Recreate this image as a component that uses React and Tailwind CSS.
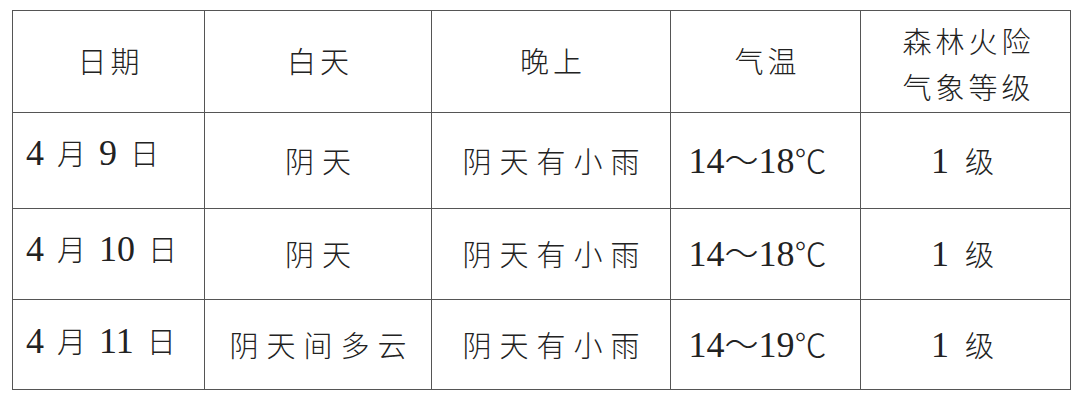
const rows = [
  { m: "9", day: "阴天", temp: ["14", "18"], h: "h-[96px]", lift: "pb-[16px]" },
  { m: "10", day: "阴天", temp: ["14", "18"], h: "h-[91px]", lift: "pb-[10px]" },
  { m: "11", day: "阴天间多云", temp: ["14", "19"], h: "h-[90px]", lift: "pb-[8px]" },
];

const cell = "border-[1.5px] border-[#555] text-center align-middle";
const num = "font-['Liberation_Serif',serif] font-normal text-[36px] leading-none tracking-normal";

export default function App() {
  return (
    <div className="w-[1080px] h-[404px] bg-white pt-[10px] pl-[12px] text-[#222] font-['Noto_Sans_CJK_SC',sans-serif] font-light">
      <table className="border-collapse table-fixed w-[1058px] text-[29px]">
        <colgroup>
          <col className="w-[192px]" />
          <col className="w-[227px]" />
          <col className="w-[239px]" />
          <col className="w-[190px]" />
          <col className="w-[210px]" />
        </colgroup>
        <thead>
          <tr className="h-[102px] tracking-[4px]">
            <th className={`${cell} font-light pl-[4px] pb-[2px]`}>日期</th>
            <th className={`${cell} font-light pl-[4px] pb-[2px]`}>白天</th>
            <th className={`${cell} font-light pl-[4px] pb-[2px]`}>晚上</th>
            <th className={`${cell} font-light pl-[4px] pb-[2px]`}>气温</th>
            <th className={`${cell} font-light leading-[46px] pt-[2px] pl-[6px]`}>
              森林火险
              <br />
              气象等级
            </th>
          </tr>
        </thead>
        <tbody>
          {rows.map((r) => (
            <tr key={r.m} className={r.h}>
              <td className={`${cell} !text-left pl-[13px] ${r.lift}`}>
                <div className="flex items-center gap-[13px]">
                  <span className={num}>4</span>
                  <span>月</span>
                  <span className={num}>{r.m}</span>
                  <span>日</span>
                </div>
              </td>
              <td className={`${cell} tracking-[8px] pl-[8px]`}>{r.day}</td>
              <td className={`${cell} tracking-[8px] pl-[8px]`}>阴天有小雨</td>
              <td className={`${cell} pr-[16px]`}>
                <span className={num}>{r.temp[0]}</span>
                <span className="text-[34px] leading-none">～</span>
                <span className={num}>{r.temp[1]}</span>
                <span className="text-[32px] leading-none">℃</span>
              </td>
              <td className={cell}>
                <div className="flex items-center justify-center gap-[16px] pr-[6px]">
                  <span className={num}>1</span>
                  <span>级</span>
                </div>
              </td>
            </tr>
          ))}
        </tbody>
      </table>
    </div>
  );
}
